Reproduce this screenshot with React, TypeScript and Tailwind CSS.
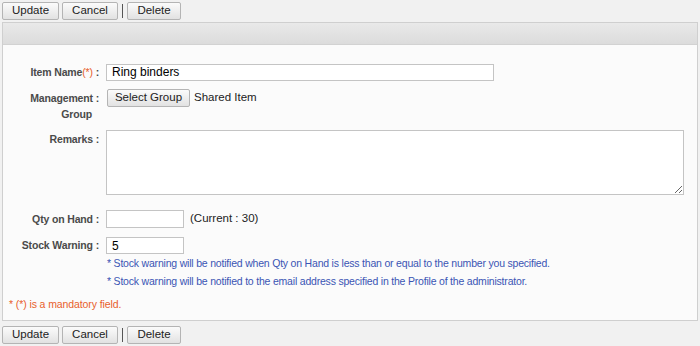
const font = "font-['Liberation_Sans',Arial,sans-serif]";

function Btn({ children, w }: { children: React.ReactNode; w: string }) {
    return (
        <button className={`${w} h-[18px] border border-[#b4b4b4] rounded-[2px] bg-gradient-to-b from-[#fbfbfb] to-[#e2e2e2] text-[11.5px] text-[#222] leading-none flex items-center justify-center`}>
            {children}
        </button>
    );
}

function ActionBar() {
    return (
        <div className="flex items-center h-[18px] pl-[2px]">
            <Btn w="w-[57px]">Update</Btn>
            <div className="w-[3px]" />
            <Btn w="w-[56px]">Cancel</Btn>
            <div className="w-[1px] h-[14px] bg-[#555] mx-[4px]" />
            <Btn w="w-[54px]">Delete</Btn>
        </div>
    );
}

const labelCls = "w-[98px] shrink-0 text-right text-[10.5px] font-bold tracking-[-0.15px] text-[#4a4a4a] pr-[2px]";

export default function App() {
    return (
        <div className={`${font} bg-[#f1f1f1] w-[700px] h-[346px] pt-[2px]`}>
            <ActionBar />
            <div className="mx-[2px] mt-[2px] border border-[#cfcfcf]">
                <div className="h-[22px] bg-gradient-to-b from-[#e9e9e9] to-[#dcdcdc] border-b border-[#d2d2d2]" />
                <div className="bg-[#fbfbfb] pt-[18px] pb-[8px]">
                    <div className="flex items-center h-[18px]">
                        <div className={`${labelCls} leading-[16px]`}>
                            Item Name<span className="text-[#e8602c] font-normal">(*)</span> :
                        </div>
                        <input
                            defaultValue="Ring binders"
                            className="ml-[5px] w-[388px] h-[17px] border border-[#c4c4c4] bg-white px-[5px] text-[12px] text-black outline-none"
                        />
                    </div>
                    <div className="flex items-start mt-[8px] h-[33px]">
                        <div className={`${labelCls} leading-[16px] pt-[1px]`}>
                            <div>Management :</div>
                            <div className="pr-[7px]">Group</div>
                        </div>
                        <button className="ml-[6px] w-[83px] h-[18px] border border-[#b4b4b4] rounded-[2px] bg-gradient-to-b from-[#fbfbfb] to-[#e2e2e2] text-[11.5px] text-[#222] leading-none">
                            Select Group
                        </button>
                        <span className="ml-[4px] text-[11.5px] text-[#222] leading-[16px]">Shared Item</span>
                    </div>
                    <div className="flex items-start mt-[8px]">
                        <div className={`${labelCls} leading-[16px] pt-[1px]`}>Remarks :</div>
                        <textarea className="ml-[5px] w-[578px] h-[65px] border border-[#c4c4c4] bg-white outline-none resize-y" />
                    </div>
                    <div className="flex items-center mt-[15px] h-[18px]">
                        <div className={`${labelCls} leading-[16px]`}>Qty on Hand :</div>
                        <input className="ml-[5px] w-[78px] h-[18px] border border-[#c4c4c4] bg-white px-[5px] text-[12px] outline-none" />
                        <span className="ml-[6px] text-[11.5px] text-[#222]">(Current : 30)</span>
                    </div>
                    <div className="flex items-start mt-[9px]">
                        <div className={`${labelCls} leading-[17px]`}>Stock Warning :</div>
                        <div className="ml-[5px]">
                            <input
                                defaultValue="5"
                                className="block w-[78px] h-[17px] border border-[#c4c4c4] bg-white px-[5px] text-[12px] text-black outline-none"
                            />
                            <div className="text-[10.5px] tracking-[-0.2px] text-[#3a55b4] leading-[18px] pl-[1px]">
                                <div>* Stock warning will be notified when Qty on Hand is less than or equal to the number you specified.</div>
                                <div>* Stock warning will be notified to the email address specified in the Profile of the administrator.</div>
                            </div>
                        </div>
                    </div>
                    <div className="mt-[6px] pl-[6px] text-[10.5px] tracking-[-0.1px] text-[#e8602c] leading-[16px]">
                        * (*) is a mandatory field.
                    </div>
                </div>
            </div>
            <div className="mt-[5px]">
                <ActionBar />
            </div>
        </div>
    );
}
